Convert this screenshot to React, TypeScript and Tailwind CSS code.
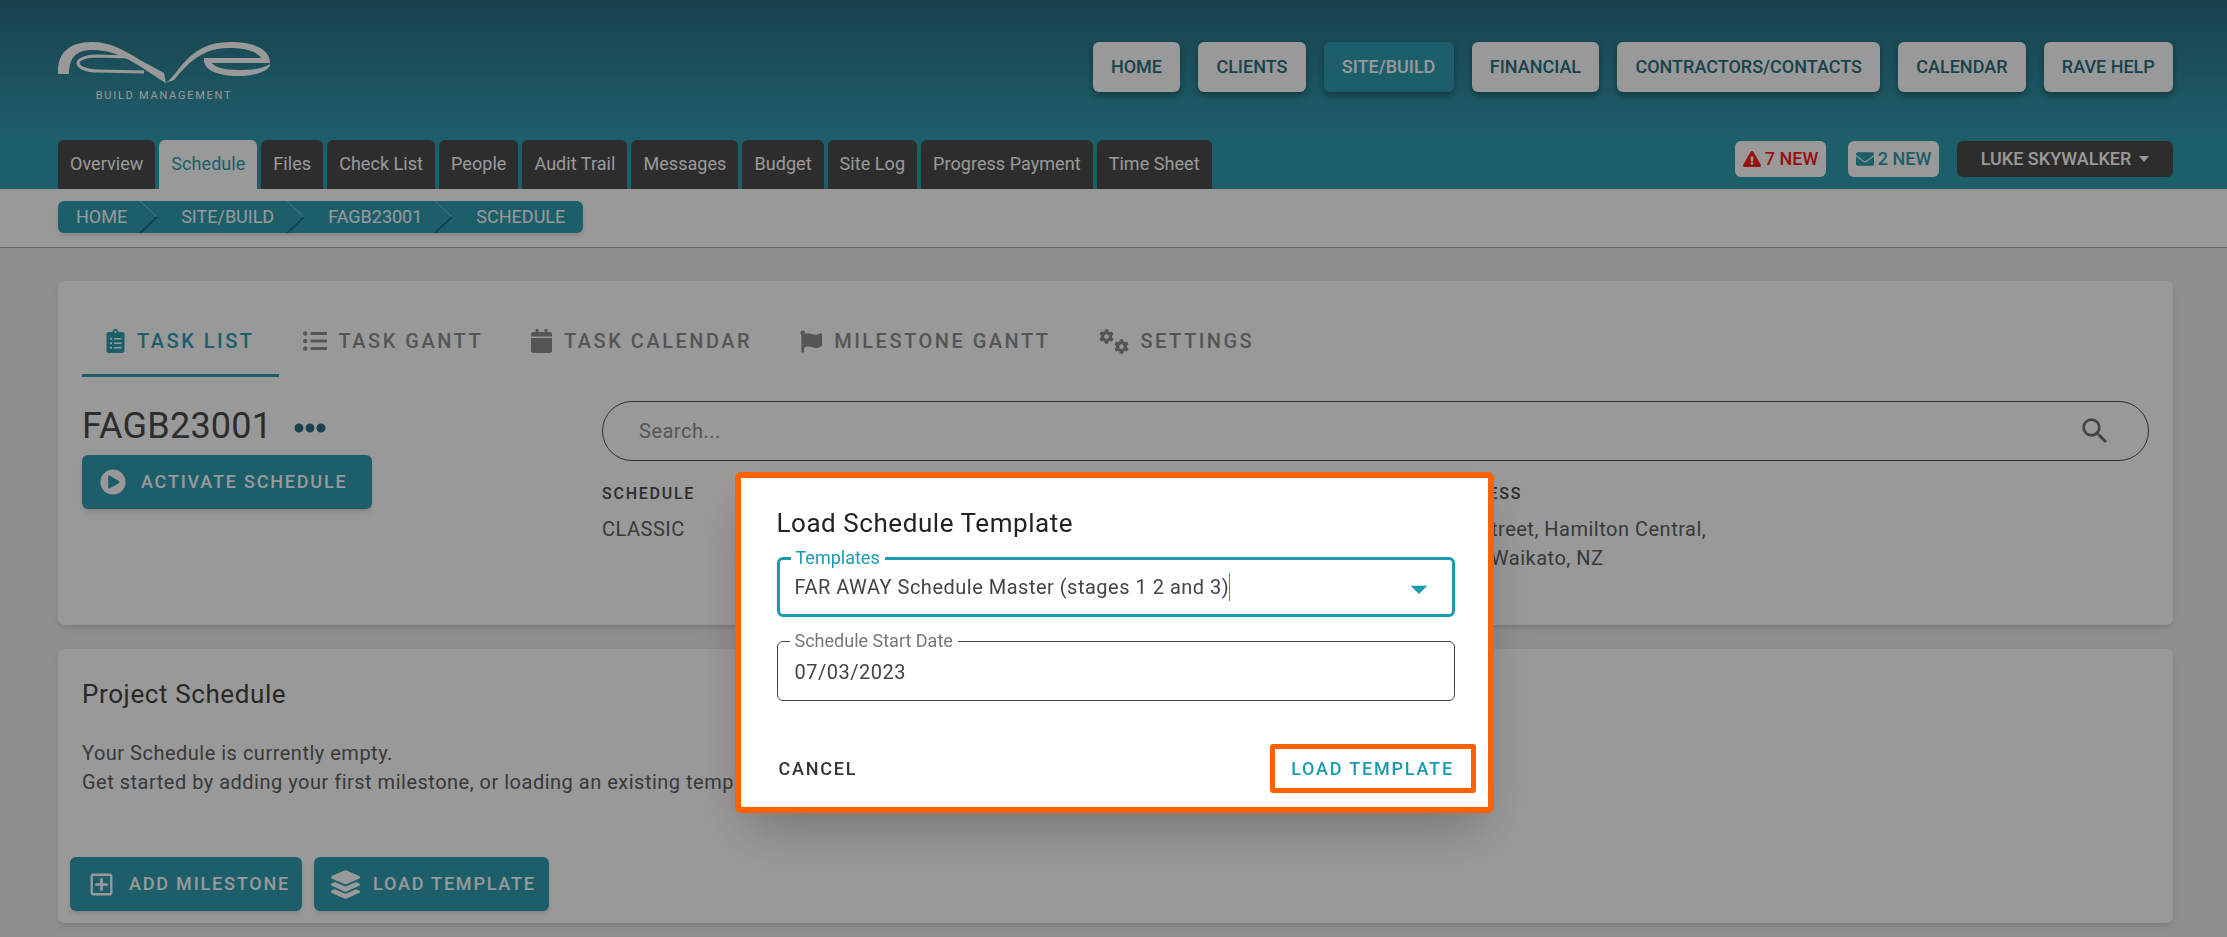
import React from "react";
import {
  FaCalendar,
  FaClipboardList,
  FaCog,
  FaEllipsisH,
  FaEnvelope,
  FaExclamationTriangle,
  FaFlag,
  FaLayerGroup,
  FaListUl,
  FaPlayCircle,
  FaRegPlusSquare,
} from "react-icons/fa";
import { MdArrowDropDown, MdSearch } from "react-icons/md";

const navItems = ["Home", "Clients", "Site/Build", "Financial", "Contractors/Contacts", "Calendar", "Rave Help"];
const subTabs = ["Overview", "Schedule", "Files", "Check List", "People", "Audit Trail", "Messages", "Budget", "Site Log", "Progress Payment", "Time Sheet"];
const crumbs = ["Home", "Site/Build", "FAGB23001", "Schedule"];

function Logo() {
  return (
    <div className="flex w-[212px] flex-col items-center">
      <svg width="212" height="41" viewBox="0 0 212 41" fill="#ffffff">
        <path d="M0 32 C-1 14 8 0 34 0 C52 0 66 8 82 18 L106 31 L108 41 C88 30 66 8 34 8 C18 8 11 16 11 32 Z" />
        <path d="M107 41 C120 36 128 0 172 0 C198 0 212 8 212 21 L146 21 L146 16 L203 16 C198 9 188 6 170 6 C140 6 125 28 116 38 Z" />
        <path d="M146 18 C146 28 160 34 180 34 C196 34 208 30 212 24 L212 22 C204 27 194 28 180 28 C166 28 154 25 152 18 Z" />
        <path d="M72 15 L40 14 C26 14 20 18 20 21 C20 25 28 29 40 29 L86 30" fill="none" stroke="#ffffff" strokeWidth="3" />
      </svg>
      <span className="mt-[7px] text-[11px] leading-[12px] tracking-[1.75px] text-white">BUILD MANAGEMENT</span>
    </div>
  );
}

function Header() {
  return (
    <header className="flex h-[189px] flex-col justify-between bg-linear-to-b from-[#2a6e80] to-[#309db1] to-70% pl-[58px] pr-[54px]">
      <div className="flex items-start justify-between pt-[42px]">
        <Logo />
        <nav className="flex gap-[18px]">
          {navItems.map((item) => (
            <div
              key={item}
              className={`flex h-[50px] items-center rounded-md px-[18.2px] text-lg font-medium uppercase shadow-[0_3px_6px_rgba(0,0,0,0.35)] ${
                item === "Site/Build" ? "bg-[#309db1] text-white" : "bg-white text-[#2a6e80]"
              }`}
            >
              {item}
            </div>
          ))}
        </nav>
      </div>
      <div className="flex items-start justify-between">
        <div className="flex gap-1">
          {subTabs.map((tab) => (
            <div
              key={tab}
              className={`flex h-[49px] items-center rounded-t-md px-3 pb-[2px] text-lg tracking-[0.05px] ${
                tab === "Schedule" ? "bg-white text-[#309db1]" : "bg-[#4b4b4b] text-white"
              }`}
            >
              {tab}
            </div>
          ))}
        </div>
        <div className="mt-px flex items-center">
          <div className="flex h-9 w-[91px] items-center justify-center gap-1 rounded-md bg-white text-lg font-medium text-[#ff1a1a]">
            <FaExclamationTriangle size={18} />
            7 NEW
          </div>
          <div className="ml-[22px] flex h-9 w-[91px] items-center justify-center gap-1 rounded-md bg-white text-lg font-medium text-[#309db1]">
            <FaEnvelope size={18} />
            2 NEW
          </div>
          <div className="ml-[18px] flex h-9 w-[216px] items-center justify-center gap-2 rounded-md bg-[#4b4b4b] text-lg font-medium text-white">
            LUKE SKYWALKER
            <span className="h-0 w-0 border-x-[5px] border-t-[6px] border-x-transparent border-t-white" />
          </div>
        </div>
      </div>
    </header>
  );
}

function Breadcrumbs() {
  return (
    <div className="h-[59px] border-b border-[#a8a8a8] bg-white pl-[58px] pt-3">
      <div className="inline-flex h-8 rounded-md bg-[#309db1] shadow-md">
        {crumbs.map((crumb, i) => (
          <div
            key={crumb}
            className={`relative flex items-center text-lg uppercase text-white ${i === 0 ? "pl-[18px]" : "pl-[23px]"} ${
              i === crumbs.length - 1 ? "pr-[18px]" : "pr-[31px]"
            }`}
          >
            {crumb}
            {i < crumbs.length - 1 && (
              <svg className="absolute right-0 top-0" width="18" height="32" viewBox="0 0 18 32" fill="none">
                <path d="M0 0 L17 16" stroke="#8cc6d1" />
                <path d="M17 16 L0 32" stroke="#1d6676" strokeWidth="1.500" />
              </svg>
            )}
          </div>
        ))}
      </div>
    </div>
  );
}

function Gears() {
  return (
    <span className="flex h-[25px] w-[30px]">
      <FaCog size={15} className="self-start" />
      <FaCog size={15} className="self-end" />
    </span>
  );
}

const taskTabs = [
  { label: "Task List", icon: <FaClipboardList className="h-6 w-[19px]" />, active: true },
  { label: "Task Gantt", icon: <FaListUl size={24} /> },
  { label: "Task Calendar", icon: <FaCalendar className="h-6 w-[21px]" /> },
  { label: "Milestone Gantt", icon: <FaFlag className="h-[23px] w-[22px]" /> },
  { label: "Settings", icon: <Gears /> },
];

function ScheduleCard() {
  return (
    <section className="h-[344px] rounded-md bg-white px-6 pt-6 shadow-md">
      <div className="flex">
        {taskTabs.map((tab) => (
          <div
            key={tab.label}
            className={`flex h-[72px] items-center gap-3 border-b-[3px] px-6 pt-[3px] text-xl font-medium uppercase tracking-[2.5px] ${
              tab.active ? "border-[#309db1] text-[#309db1]" : "border-transparent text-[#8e8e8e]"
            }`}
          >
            {tab.icon}
            {tab.label}
          </div>
        ))}
      </div>
      <div className="mt-6 flex">
        <div className="w-[520px] pt-1">
          <div className="flex h-10 items-center gap-[22px] pt-px text-[36px] font-normal tracking-[0.2px] text-[#4b4b4b]">
            FAGB23001
            <FaEllipsisH size={32} className="mt-1 text-[#2a6e80]" />
          </div>
          <button className="mt-2.5 flex h-[54px] w-[290px] items-center gap-[15px] rounded-md bg-[#309db1] pl-[18px] text-lg font-medium uppercase tracking-[1.8px] text-white shadow-md">
            <FaPlayCircle size={26} />
            Activate Schedule
          </button>
        </div>
        <div className="flex-1">
          <div className="flex h-[60px] items-center justify-between rounded-full border border-[#505050] pl-9 pr-[36px]">
            <span className="text-xl tracking-[0.5px] text-[#8e8e8e]">Search...</span>
            <MdSearch size={34} className="text-[#757575]" />
          </div>
          <div className="mt-[23px] grid grid-cols-[823px_1fr] text-[#606060]">
            <div>
              <div className="h-5 text-base font-medium uppercase leading-5 tracking-[1.75px] text-[#4b4b4b]">Schedule</div>
              <div className="mt-[11px] text-xl leading-[29px] tracking-[0.5px]">CLASSIC</div>
            </div>
            <div>
              <div className="h-5 pl-[15px] text-base font-medium uppercase leading-5 tracking-[1.75px] text-[#4b4b4b]">Address</div>
              <div className="mt-[11px] text-xl leading-[29px] tracking-[0.5px]">
                <div>Ward Street, Hamilton Central,</div>
                <div className="pl-[9px]">3204, Waikato, NZ</div>
              </div>
            </div>
          </div>
        </div>
      </div>
    </section>
  );
}

function ProjectCard() {
  return (
    <section className="mt-6 flex h-[274px] flex-col rounded-md bg-white pt-[28px] shadow-md">
      <h2 className="pl-6 text-[26px] font-normal leading-[34px] tracking-[0.6px] text-[#444444]">Project Schedule</h2>
      <p className="mt-[28px] pl-6 text-xl leading-[29px] tracking-[0.5px] text-[#606060]">
        Your Schedule is currently empty.
        <br />
        Get started by adding your first milestone, or loading an existing template.
      </p>
      <div className="mt-[60px] flex gap-3 pl-3">
        <button className="flex h-[54px] w-[232px] items-center gap-[15px] rounded-md bg-[#309db1] pl-[19px] text-lg font-medium uppercase tracking-[1.8px] text-white shadow-md">
          <FaRegPlusSquare size={25} />
          Add Milestone
        </button>
        <button className="flex h-[54px] w-[235px] items-center gap-[13px] rounded-md bg-[#309db1] pl-[17px] text-lg font-medium uppercase tracking-[1.8px] text-white shadow-md">
          <FaLayerGroup size={29} />
          Load Template
        </button>
      </div>
    </section>
  );
}

function LoadTemplateDialog() {
  return (
    <div className="fixed inset-0 flex items-start justify-center bg-black/40 pl-px pt-[472px]">
      <div className="h-[341px] w-[759px] rounded-md border-[6px] border-[#ff6000] bg-white pl-[36px] pr-[33px] pt-7 shadow-2xl">
        <h3 className="text-[26px] font-normal leading-[34px] tracking-[0.55px] text-[#222222]">Load Schedule Template</h3>
        <div className="relative mt-[17px] flex h-[60px] items-center justify-between rounded-md border-[3px] border-[#1a9bb0] pl-[15px] pr-[13px] text-xl tracking-[0.5px] text-[#444444]">
          <span className="absolute -top-[12px] left-[11px] bg-white px-[5px] text-lg leading-5 tracking-normal text-[#1a9bb0]">Templates</span>
          <span className="border-r border-[#1a9bb0]">FAR AWAY Schedule Master (stages 1 2 and 3)</span>
          <MdArrowDropDown size={40} className="mt-1 text-[#1a9bb0]" />
        </div>
        <div className="relative mt-6 flex h-[60px] items-center rounded-md border border-[#444444] pl-[17px] text-xl tracking-[0.5px] text-[#444444]">
          <span className="absolute -top-[11px] left-[12px] bg-white px-[5px] text-lg leading-5 tracking-normal text-[#777777]">Schedule Start Date</span>
          <span className="pt-0.5">07/03/2023</span>
        </div>
        <div className="mt-[43px] flex items-center justify-between pl-[2px]">
          <span className="pt-px text-lg font-medium uppercase tracking-[1.75px] text-[#333333]">Cancel</span>
          <div className="-mr-[21px] flex h-[49px] w-[206px] items-center justify-center rounded-[3px] border-[5px] border-[#ff6000] pt-px text-lg font-medium uppercase tracking-[1.8px] text-[#1a9bb0]">
            Load Template
          </div>
        </div>
      </div>
    </div>
  );
}

export default function App() {
  return (
    <div className="relative h-[937px] overflow-hidden bg-[#eeeeee] font-['Roboto',sans-serif]">
      <Header />
      <Breadcrumbs />
      <main className="pl-[58px] pr-[54px] pt-[33px]">
        <ScheduleCard />
        <ProjectCard />
      </main>
      <LoadTemplateDialog />
    </div>
  );
}
